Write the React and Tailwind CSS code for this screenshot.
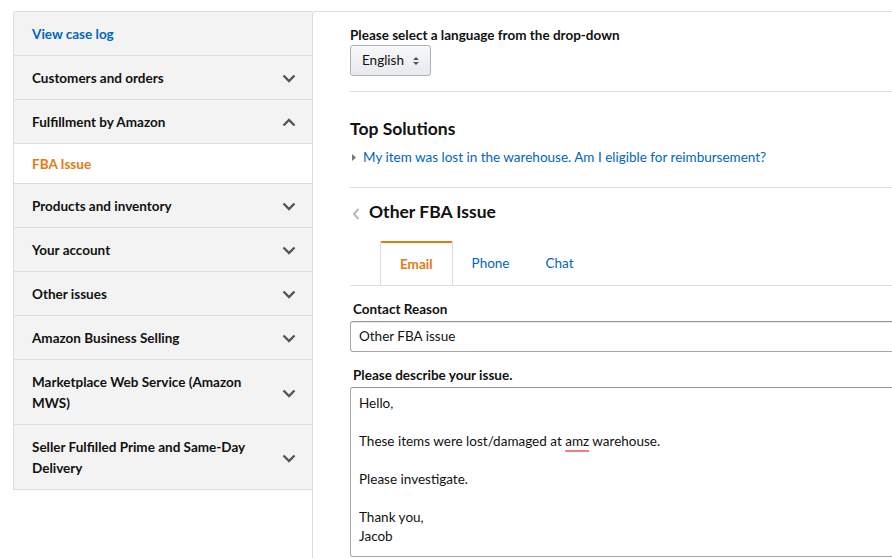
import React from "react";

const font = { fontFamily: "Lato, 'Liberation Sans', sans-serif" };

function Chevron({ up }) {
  return (
    <svg width="14" height="9" viewBox="0 0 14 9" className="shrink-0">
      <path
        d={up ? "M1.5 7.5 L7 2 L12.5 7.5" : "M1.5 1.5 L7 7 L12.5 1.5"}
        fill="none"
        stroke="#555"
        strokeWidth="2.4"
      />
    </svg>
  );
}

const sideItems = [
  "Products and inventory",
  "Your account",
  "Other issues",
  "Amazon Business Selling",
  "Marketplace Web Service (Amazon MWS)",
  "Seller Fulfilled Prime and Same-Day Delivery",
];

function SideRow({ label, up }) {
  return (
    <div className="flex items-center justify-between bg-[#f3f3f3] border-b border-[#ddd] pl-[18px] pr-[16px] pt-[12px] pb-[10px]">
      <span className="text-[13.5px] leading-[21px] font-bold text-[#111] pr-6">{label}</span>
      <Chevron up={up} />
    </div>
  );
}

function Sidebar() {
  return (
    <div className="w-[299px] shrink-0 self-start border-l border-t border-[#ddd] rounded-tl-[3px]">
      <div className="bg-[#f3f3f3] border-b border-[#ddd] pl-[18px] pt-[12px] pb-[10px] text-[13.5px] leading-[21px] font-bold text-[#0066c0]">
        View case log
      </div>
      <SideRow label="Customers and orders" />
      <SideRow label="Fulfillment by Amazon" up />
      <div className="bg-white border-b border-[#ddd] pl-[18px] pt-[10px] pb-[8px] text-[13.5px] leading-[21px] font-bold text-[#e47911]">
        FBA Issue
      </div>
      {sideItems.map((s) => (
        <SideRow key={s} label={s} />
      ))}
    </div>
  );
}

function Tabs() {
  return (
    <div className="flex border-b border-[#ddd] pl-[30px]">
      <div className="px-[19px] h-[44px] flex items-center bg-white border-x border-[#ddd] border-t-2 border-t-[#e47911] -mb-px rounded-t-[2px] text-[13.5px] font-bold text-[#e47911]">
        Email
      </div>
      <div className="px-[19px] h-[44px] flex items-center text-[13.5px] text-[#0066c0]">Phone</div>
      <div className="pl-[17px] pr-[19px] h-[44px] flex items-center text-[13.5px] text-[#0066c0]">Chat</div>
    </div>
  );
}

function Main() {
  return (
    <div className="flex-1 border-l border-t border-[#ddd] rounded-tl-[3px] pl-[37px] pt-[14px] text-[#111]">
      <div className="text-[13.5px] font-bold leading-[19px]">Please select a language from the drop-down</div>
      <div className="inline-flex items-center gap-[9px] h-[31px] px-[11px] rounded-[3px] border border-[#adb1b8] bg-gradient-to-b from-[#f7f8fa] to-[#e7e9ec] shadow-[0_1px_0_rgba(255,255,255,0.6)_inset] text-[13.5px]">
        English
        <svg width="6" height="10" viewBox="0 0 6 10">
          <path d="M0 4 L3 1 L6 4 Z M0 6 L3 9 L6 6 Z" fill="#555" />
        </svg>
      </div>
      <div className="border-t border-[#ddd] mt-[15px]" />
      <h2 className="mt-[25px] text-[17.5px] font-bold leading-[24px]">Top Solutions</h2>
      <div className="mt-[6px] flex items-center gap-[7px] text-[13.5px] leading-[20px]">
        <svg width="4" height="7" viewBox="0 0 4 7" className="ml-[2px]">
          <path d="M0 0 L4 3.5 L0 7 Z" fill="#777" />
        </svg>
        <span className="text-[#0066c0]">My item was lost in the warehouse. Am I eligible for reimbursement?</span>
      </div>
      <div className="border-t border-[#ddd] mt-[20px]" />
      <div className="mt-[12px] flex items-center gap-[9px]">
        <svg width="8" height="12" viewBox="0 0 8 12" className="ml-[2px] mt-[3px]">
          <path d="M6.5 1 L2 6 L6.5 11" fill="none" stroke="#bbb" strokeWidth="2.2" />
        </svg>
        <h3 className="text-[17.5px] font-bold leading-[24px]">Other FBA Issue</h3>
      </div>
      <div className="mt-[17px]">
        <Tabs />
      </div>
      <div className="pl-[3px] mt-[14px] text-[13.5px] font-bold leading-[18px]">Contact Reason</div>
      <div className="mt-[3px] w-[600px] h-[31px] border border-[#a6a6a6] border-t-[#949494] rounded-[3px] flex items-center px-[8px] text-[13.5px] shadow-[0_1px_0_rgba(255,255,255,0.5),0_1px_0_rgba(0,0,0,0.07)_inset]">
        Other FBA issue
      </div>
      <div className="pl-[3px] mt-[14px] text-[13.5px] font-bold leading-[18px]">Please describe your issue.</div>
      <div className="mt-[3px] w-[600px] h-[170px] border border-[#a6a6a6] border-t-[#949494] rounded-[3px] px-[8px] pt-[6px] text-[13.5px] leading-[19px]">
        <div>Hello,</div>
        <div className="h-[19px]" />
        <div>
          These items were lost/damaged at{" "}
          <span className="underline decoration-[#f47c7c] decoration-2 underline-offset-[4px]">amz</span> warehouse.
        </div>
        <div className="h-[19px]" />
        <div>Please investigate.</div>
        <div className="h-[19px]" />
        <div>Thank you,</div>
        <div>Jacob</div>
      </div>
    </div>
  );
}

export default function App() {
  return (
    <div style={font} className="w-[892px] h-[558px] overflow-hidden bg-white flex pl-[13px] pt-[11px]">
      <Sidebar />
      <Main />
    </div>
  );
}
